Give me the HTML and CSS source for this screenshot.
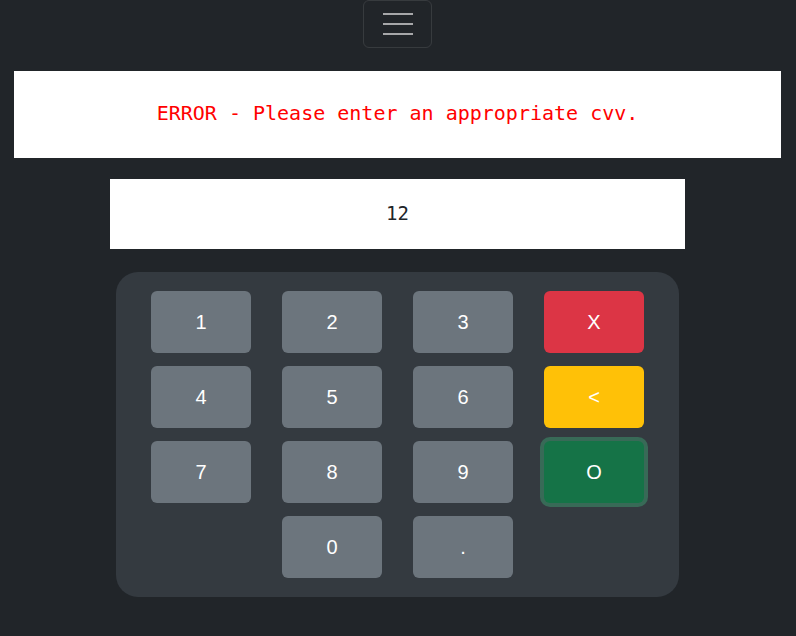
FILE: index.html
```html
<!DOCTYPE html>
<html lang="en">
<head>
<meta charset="utf-8">
<title>CVV Keypad</title>
<link rel="stylesheet" href="styles.css">
</head>
<body>
<div class="page">
  <nav class="nav">
    <button class="toggler" type="button" aria-label="Menu">
      <svg width="30" height="22" viewBox="0 0 30 22" aria-hidden="true">
        <path d="M0 1h30M0 11h30M0 21h30" stroke="rgba(255,255,255,0.6)" stroke-width="2.2"/>
      </svg>
    </button>
  </nav>
  <div class="error">ERROR - Please enter an appropriate cvv.</div>
  <div class="display">12</div>
  <div class="keypad">
    <button class="key">1</button>
    <button class="key">2</button>
    <button class="key">3</button>
    <button class="key key-red">X</button>
    <button class="key">4</button>
    <button class="key">5</button>
    <button class="key">6</button>
    <button class="key key-yellow">&lt;</button>
    <button class="key">7</button>
    <button class="key">8</button>
    <button class="key">9</button>
    <button class="key key-green">O</button>
    <span class="spacer"></span>
    <button class="key">0</button>
    <button class="key">.</button>
  </div>
</div>
</body>
</html>
```
FILE: styles.css
```css
html, body {
  margin: 0;
  padding: 0;
  background: #212529;
  height: 100%;
}
.page {
  padding: 0 15px 0 14px;
  display: flex;
  flex-direction: column;
  align-items: center;
}
.nav {
  display: flex;
  justify-content: center;
  width: 100%;
}
.toggler {
  width: 69px;
  height: 48px;
  padding: 0;
  background: transparent;
  border: 1px solid rgba(255,255,255,0.1);
  border-radius: 6px;
  display: flex;
  align-items: center;
  justify-content: center;
}
.toggler svg {
  display: block;
}
.error {
  margin-top: 23px;
  align-self: stretch;
  height: 87px;
  box-sizing: border-box;
  padding-bottom: 4px;
  background: #ffffff;
  color: #ff0000;
  font-family: "DejaVu Sans Mono", "Liberation Mono", monospace;
  font-size: 20px;
  display: flex;
  align-items: center;
  justify-content: center;
}
.display {
  margin-top: 21px;
  width: 575px;
  height: 70px;
  box-sizing: border-box;
  padding-bottom: 2px;
  background: #ffffff;
  color: #212529;
  font-family: "DejaVu Sans Mono", "Liberation Mono", monospace;
  font-size: 19px;
  display: flex;
  align-items: center;
  justify-content: center;
}
.keypad {
  margin-top: 23px;
  width: 563px;
  box-sizing: border-box;
  padding: 19px 35px;
  background: #343a40;
  border-radius: 22px;
  display: grid;
  grid-template-columns: repeat(4, 100px);
  grid-auto-rows: 62px;
  column-gap: 31px;
  row-gap: 13px;
}
.key {
  border: none;
  border-radius: 6px;
  background: #6c757d;
  color: #ffffff;
  font-family: "Liberation Sans", Arial, sans-serif;
  font-size: 20px;
  padding: 0;
}
.key-red {
  background: #dc3545;
}
.key-yellow {
  background: #ffc107;
}
.key-green {
  background: #157347;
  box-shadow: 0 0 0 4px rgba(60,153,110,0.5);
}
```
